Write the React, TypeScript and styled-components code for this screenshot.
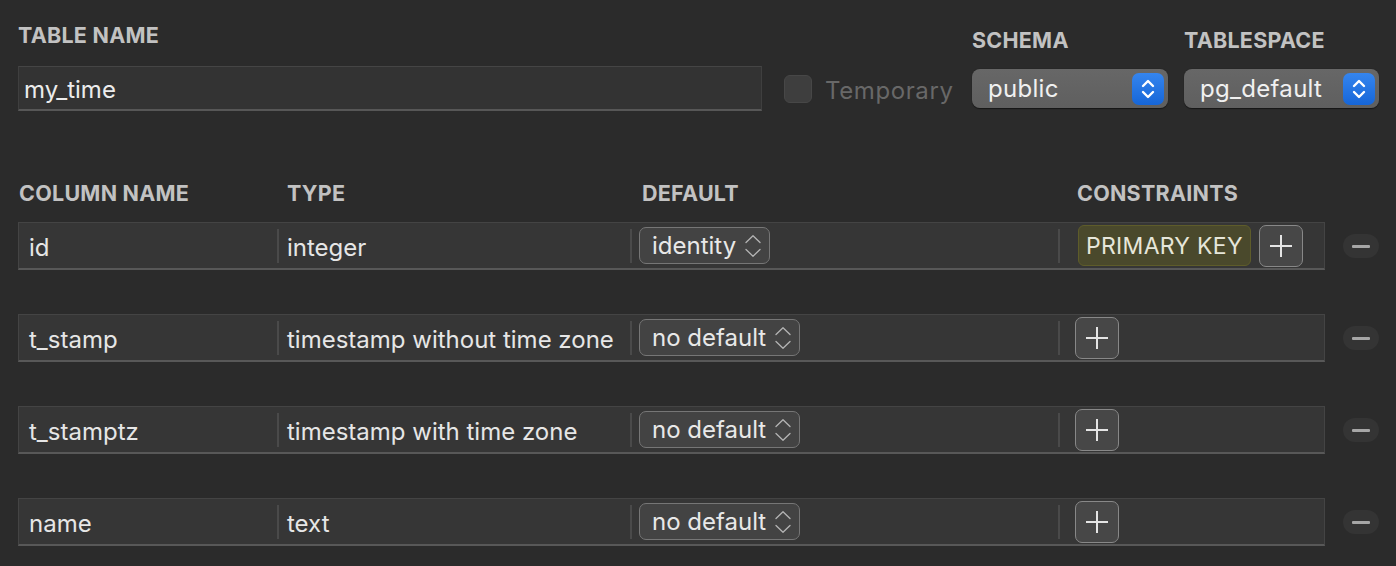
import styled, { createGlobalStyle } from "styled-components";

const GlobalStyle = createGlobalStyle`
  html, body {
    margin: 0;
    background: #2b2b2b;
  }
  body {
    font-family: Inter, "Noto Sans", sans-serif;
    color: #e6e6e6;
  }
`;

const columns = [
  { name: "id", type: "integer", def: "identity", pk: true },
  { name: "t_stamp", type: "timestamp without time zone", def: "no default", pk: false },
  { name: "t_stamptz", type: "timestamp with time zone", def: "no default", pk: false },
  { name: "name", type: "text", def: "no default", pk: false },
];

const StepperIcon = () => (
  <svg width="32" height="32" viewBox="0 0 32 32">
    <path d="M11 13 L16 8 L21 13" fill="none" stroke="#fff" strokeWidth="2.4" strokeLinecap="round" strokeLinejoin="round" />
    <path d="M11 19 L16 24 L21 19" fill="none" stroke="#fff" strokeWidth="2.4" strokeLinecap="round" strokeLinejoin="round" />
  </svg>
);

const UpDownIcon = () => (
  <svg width="16" height="22" viewBox="0 0 16 22">
    <path d="M1 7.5 L8 0.8 L15 7.5" fill="none" stroke="#b4b4b4" strokeWidth="1.3" strokeLinecap="round" strokeLinejoin="round" />
    <path d="M1 14.5 L8 21.2 L15 14.5" fill="none" stroke="#b4b4b4" strokeWidth="1.3" strokeLinecap="round" strokeLinejoin="round" />
  </svg>
);

const App = () => {
  return (
    <Page>
      <GlobalStyle />
      <TopGrid>
        <Label>TABLE NAME</Label>
        <span />
        <Label $drop>SCHEMA</Label>
        <Label $drop>TABLESPACE</Label>

        <NameInput>my_time</NameInput>
        <TempGroup>
          <Checkbox />
          <TempText>Temporary</TempText>
        </TempGroup>
        <Popup>
          <PopupText>public</PopupText>
          <Stepper>
            <StepperIcon />
          </Stepper>
        </Popup>
        <Popup>
          <PopupText>pg_default</PopupText>
          <Stepper>
            <StepperIcon />
          </Stepper>
        </Popup>
      </TopGrid>

      <Header>
        <HeadText $pad={0}>COLUMN NAME</HeadText>
        <HeadText $pad={10}>TYPE</HeadText>
        <HeadText $pad={12}>DEFAULT</HeadText>
        <HeadText $pad={19}>CONSTRAINTS</HeadText>
      </Header>

      <Rows>
        {columns.map((c) => (
          <RowLine key={c.name}>
            <Row>
              <Cell $pad={10}>
                <CellText>{c.name}</CellText>
              </Cell>
              <Cell $pad={10} $divider>
                <CellText>{c.type}</CellText>
              </Cell>
              <Cell $pad={9} $divider>
                <DefaultSelect>
                  <span>{c.def}</span>
                  <UpDownIcon />
                </DefaultSelect>
              </Cell>
              <Cell $pad={17} $divider>
                {c.pk && <Badge>PRIMARY KEY</Badge>}
                <PlusBtn>
                  <svg width="22" height="22" viewBox="0 0 22 22">
                    <path d="M11 0 V22 M0 11 H22" stroke="#e4e4e4" strokeWidth="2" />
                  </svg>
                </PlusBtn>
              </Cell>
            </Row>
            <MinusBtn>
              <MinusBar />
            </MinusBtn>
          </RowLine>
        ))}
      </Rows>
    </Page>
  );
};

const Page = styled.div`
  padding: 23px 17px 0 18px;
  box-sizing: border-box;
  width: 1396px;
  height: 566px;
  overflow: hidden;
`;

const TopGrid = styled.div`
  display: grid;
  grid-template-columns: 744px 1fr 196px 195px;
  column-gap: 16px;
  row-gap: 14px;
  align-items: center;
`;

const Label = styled.div<{ $drop?: boolean }>`
  align-self: start;
  padding-top: ${(p) => (p.$drop ? "5px" : "0")};
  font-size: 21.5px;
  line-height: 24px;
  font-weight: 700;
  color: #c2c2c2;
  letter-spacing: 0.25px;
  white-space: nowrap;
`;

const NameInput = styled.div`
  height: 45px;
  box-sizing: border-box;
  display: flex;
  align-items: center;
  padding: 2px 0 0 5px;
  background: #333333;
  border: 1px solid #3f3f3f;
  border-top-color: #454545;
  border-bottom: 2px solid #575757;
  font-size: 24px;
  color: #ececec;
`;

const TempGroup = styled.div`
  display: flex;
  align-items: center;
  gap: 13px;
  padding-left: 6px;
`;

const Checkbox = styled.div`
  width: 28px;
  height: 28px;
  box-sizing: border-box;
  border-radius: 6px;
  background: #3e3e3e;
  border: 1px solid #474747;
`;

const TempText = styled.span`
  padding-top: 3px;
  font-size: 24px;
  letter-spacing: 0.6px;
  color: #686868;
  white-space: nowrap;
`;

const Popup = styled.div`
  height: 39px;
  box-sizing: border-box;
  display: flex;
  align-items: center;
  justify-content: space-between;
  padding: 0 4px 0 16px;
  border-radius: 8px;
  background: linear-gradient(#676767, #5f5f5f);
  box-shadow: 0 0.5px 1px rgba(0, 0, 0, 0.5);
`;

const PopupText = styled.span`
  font-size: 24px;
  letter-spacing: 0.3px;
  color: #f0f0f0;
`;

const Stepper = styled.div`
  width: 32px;
  height: 32px;
  border-radius: 7px;
  background: linear-gradient(#3585ee, #1666d8);
  display: flex;
  align-items: center;
  justify-content: center;
`;

const grid = `
  display: grid;
  grid-template-columns: 258px 353px 428px 1fr;
`;

const Header = styled.div`
  ${grid}
  width: 1307px;
  box-sizing: border-box;
  padding: 0 1px;
  margin-top: 70px;
`;

const HeadText = styled.div<{ $pad: number }>`
  padding-left: ${(p) => p.$pad}px;
  font-size: 21.5px;
  line-height: 24px;
  font-weight: 700;
  color: #c2c2c2;
  letter-spacing: 0.25px;
  white-space: nowrap;
`;

const Rows = styled.div`
  display: flex;
  flex-direction: column;
  gap: 44px;
  margin-top: 17px;
`;

const RowLine = styled.div`
  display: flex;
  align-items: center;
  gap: 18px;
`;

const Row = styled.div`
  ${grid}
  width: 1307px;
  height: 48px;
  box-sizing: border-box;
  background: #363636;
  border: 1px solid #444444;
  border-bottom: 2px solid #585858;
`;

const Cell = styled.div<{ $pad: number; $divider?: boolean }>`
  position: relative;
  display: flex;
  align-items: center;
  padding-left: ${(p) => p.$pad}px;
  font-size: 24px;
  color: #e6e6e6;
  white-space: nowrap;

  &::before {
    content: "";
    display: ${(p) => (p.$divider ? "block" : "none")};
    position: absolute;
    left: 0;
    top: 6px;
    bottom: 5px;
    width: 2px;
    background: #4a4a4a;
  }
`;

const CellText = styled.span`
  padding-top: 3px;
`;

const DefaultSelect = styled.div`
  height: 37px;
  box-sizing: border-box;
  display: flex;
  align-items: center;
  gap: 9px;
  padding: 0 8px 0 12px;
  border-radius: 7px;
  border: 1.5px solid #767676;
  background: #434343;
  font-size: 24px;
  color: #e8e8e8;
`;

const Badge = styled.div`
  height: 41px;
  box-sizing: border-box;
  display: flex;
  align-items: center;
  margin-left: 3px;
  margin-right: 8px;
  padding: 0 7px;
  border-radius: 6px;
  background: #4a492c;
  border: 1.5px solid #5e5c2a;
  font-size: 23px;
  letter-spacing: 0.3px;
  color: #e6e6da;
`;

const PlusBtn = styled.div`
  width: 44px;
  height: 42px;
  box-sizing: border-box;
  display: flex;
  align-items: center;
  justify-content: center;
  border-radius: 7px;
  border: 1.5px solid #888888;
  background: #474747;
`;

const MinusBtn = styled.div`
  width: 36px;
  height: 24px;
  border-radius: 12px;
  background: #343434;
  display: flex;
  align-items: center;
  justify-content: center;
`;

const MinusBar = styled.div`
  width: 18px;
  height: 3px;
  border-radius: 1px;
  background: #a6a6a6;
`;

export default App;
